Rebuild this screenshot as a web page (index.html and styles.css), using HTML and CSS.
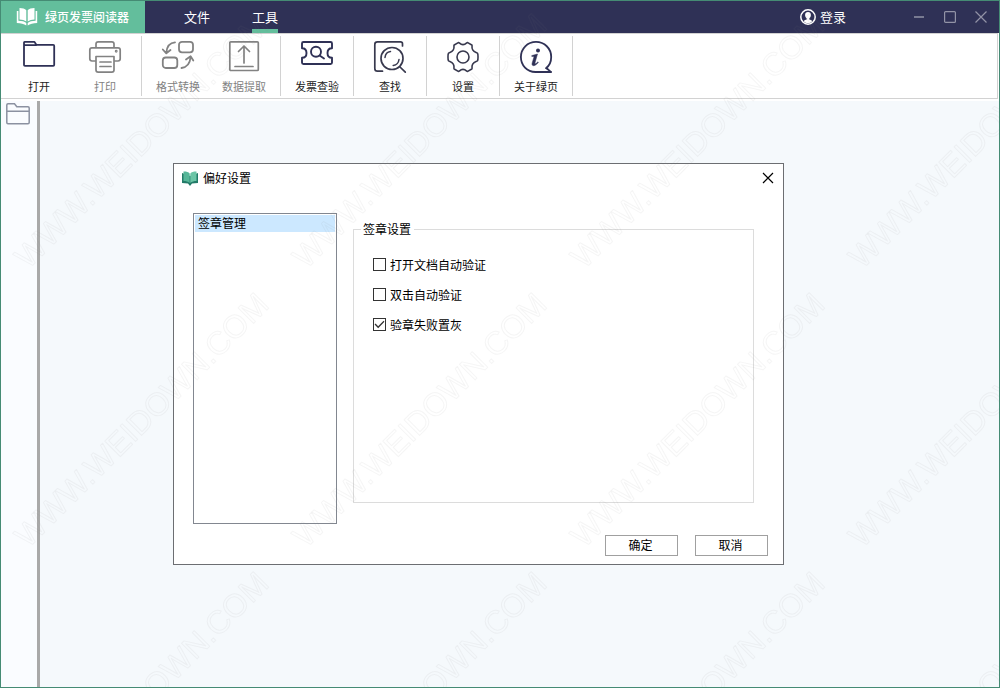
FILE: index.html
```html
<!DOCTYPE html>
<html lang="zh-CN">
<head>
<meta charset="utf-8">
<title>绿页发票阅读器</title>
<link rel="stylesheet" href="styles.css">
</head>
<body>
<div class="window">
  <header class="titlebar">
    <div class="brand">
      <svg class="brand-logo" width="22" height="20" viewBox="0 0 22 20" fill="#fff" aria-hidden="true">
        <path d="M3.500 1C6.500 1 9 1.800 10.300 3.200V14.500C8.500 13.200 6.200 12.600 3.500 12.500Z"/>
        <path d="M18.500 1C15.500 1 13 1.800 11.700 3.200V14.500C13.500 13.200 15.800 12.600 18.500 12.500Z"/>
        <path d="M0.800 4H2.400V13.800C6 13.900 8.700 14.600 10.300 16V18.500C8 16.900 4.800 16.200 0.800 16Z"/>
        <path d="M21.200 4H19.600V13.800C16 13.900 13.300 14.600 11.700 16V18.500C14 16.900 17.200 16.200 21.200 16Z"/>
      </svg>
      <span>绿页发票阅读器</span>
    </div>
    <nav class="tabs">
      <button class="tab" type="button">文件</button>
      <button class="tab tab-active" type="button">工具</button>
    </nav>
    <button class="login" type="button">
      <svg width="16" height="16" viewBox="0 0 16 16" aria-hidden="true">
        <circle cx="8" cy="8" r="7.200" fill="none" stroke="#fff" stroke-width="1.500"/>
        <path d="M8 3C9.900 3 10.900 4.300 10.900 6C10.900 7.400 10.200 8.800 9.300 9.500V10.600C10.200 11 11.500 11.200 12.300 12C10.500 15 5.500 15 3.700 12C4.500 11.200 5.800 11 6.700 10.600V9.500C5.800 8.800 5.100 7.400 5.100 6C5.100 4.300 6.100 3 8 3Z" fill="#fff"/>
      </svg>
      <span>登录</span>
    </button>
    <div class="controls">
      <button type="button" aria-label="最小化"><svg width="12" height="12" viewBox="0 0 12 12"><path d="M1 6H11" stroke-width="1.500"/></svg></button>
      <button type="button" aria-label="最大化"><svg width="12" height="12" viewBox="0 0 12 12"><rect x="0.600" y="0.600" width="10.800" height="10.800" rx="1"/></svg></button>
      <button type="button" aria-label="关闭"><svg width="12" height="12" viewBox="0 0 12 12"><path d="M0.500 0.500L11.500 11.500M11.500 0.500L0.500 11.500"/></svg></button>
    </div>
  </header>

  <div class="toolbar">
    <div class="group">
      <button class="tool" type="button">
        <svg width="34" height="34" viewBox="0 0 34 34" stroke="#2f3156" stroke-width="1.800"><path d="M2 25V2.500Q2 1.900 2.600 1.900H12.500L14.300 4.800H31.200Q32.200 4.800 32.200 5.800V24.800Q32.200 25.800 31.200 25.800H3Q2 25.800 2 25ZM2 5.200H14"/></svg>
        <span>打开</span>
      </button>
      <button class="tool" type="button" disabled>
        <svg width="34" height="34" viewBox="0 0 34 34" stroke="#828282" stroke-width="1.700"><path d="M8 8V4Q8 1.800 10.200 1.800H23.800Q26 1.800 26 4V8M8 21H4Q1.800 21 1.800 18.800V10Q1.800 7.800 4 7.800H30Q32.200 7.800 32.200 10V18.800Q32.200 21 30 21H26M8 16.500H26V30Q26 32.200 23.800 32.200H10.200Q8 32.200 8 30ZM12 22H23M12 26.500H23"/><circle cx="28.200" cy="11.200" r="0.600"/></svg>
        <span>打印</span>
      </button>
    </div>
    <div class="group">
      <button class="tool" type="button" disabled>
        <svg width="34" height="34" viewBox="0 0 34 34" stroke="#828282" stroke-width="1.800"><rect x="18" y="1.800" width="14" height="10.500" rx="3"/><rect x="1.800" y="17.500" width="14.500" height="10.500" rx="3"/><path d="M14 2.300C9 2.800 6 6.200 5.500 12M1.800 9.500L5.300 13.300L9.500 10M20.500 28C25.700 27.200 29 23.500 29.500 17.500M25 19.500L29.600 16.300L32.300 20.500"/></svg>
        <span>格式转换</span>
      </button>
      <button class="tool" type="button" disabled>
        <svg width="34" height="34" viewBox="0 0 34 34" stroke="#828282" stroke-width="1.700"><rect x="2.800" y="1.800" width="28.500" height="28.700" rx="1"/><path d="M17 23V6M11.500 11.500L17 6L22.500 11.500M8 26.500H26"/></svg>
        <span>数据提取</span>
      </button>
    </div>
    <div class="group">
      <button class="tool" type="button">
        <svg width="34" height="34" viewBox="0 0 34 34" stroke="#2f3156" stroke-width="1.900"><path d="M3.500 2H30.500Q32 2 32 3.500V8.200C28.800 8.200 27.500 10.300 27.500 13C27.500 15.700 28.800 17.800 32 17.800V22.500Q32 24 30.500 24H3.500Q2 24 2 22.500V17.800C4.800 17.800 6.500 15.700 6.500 13C6.500 10.300 4.800 8.200 2 8.200V3.500Q2 2 3.500 2Z"/><circle cx="16" cy="11.800" r="5"/><path d="M19.600 15.500L24 18.500"/></svg>
        <span>发票查验</span>
      </button>
    </div>
    <div class="group">
      <button class="tool" type="button">
        <svg width="34" height="34" viewBox="0 0 34 34" stroke="#38394e" stroke-width="1.700"><path d="M29.500 6V3.800Q29.500 1.800 27.500 1.800H4.500Q1.800 1.800 1.800 4.500V28.500Q1.800 31.200 4.500 31.200H9.500M27 27L32.300 32.200"/><circle cx="19" cy="18.500" r="11"/><path d="M12 17.500C12.300 14.500 14.500 12 17.500 11.600M26 19.500C25.600 22.700 23.500 25 20.200 25.500" stroke-width="1.500"/></svg>
        <span>查找</span>
      </button>
    </div>
    <div class="group">
      <button class="tool" type="button">
        <svg width="34" height="34" viewBox="0 0 34 34" stroke="#38394e" stroke-width="1.600"><path d="M12.300 2.600C13.500 2.300 13.800 4.600 17 4.600C20.200 4.600 20.500 2.300 21.700 2.600L25.800 5C26.700 5.700 25.100 7.100 26.700 9.900C28.300 12.700 30.500 12.200 31.500 13.200C32.200 14.200 32.200 19.800 31.500 20.800C30.500 21.800 28.300 21.300 26.700 24.100C25.100 26.900 26.700 28.300 25.800 29L21.700 31.400C20.500 31.700 20.200 29.400 17 29.400C13.800 29.400 13.500 31.700 12.300 31.400L8.200 29C7.300 28.300 8.900 26.900 7.300 24.100C5.700 21.300 3.500 21.800 2.500 20.800C1.800 19.800 1.800 14.200 2.500 13.200C3.500 12.200 5.700 12.700 7.300 9.900C8.900 7.100 7.300 5.700 8.200 5Z"/><circle cx="17" cy="17" r="6"/></svg>
        <span>设置</span>
      </button>
    </div>
    <div class="group">
      <button class="tool" type="button">
        <svg width="34" height="34" viewBox="0 0 34 34" stroke="#2f3156" stroke-width="1.800"><path d="M32.200 32H16.500C8 32 1.900 25.300 1.900 17C1.900 8.500 8.500 1.900 17 1.900C25.500 1.900 32.200 8.500 32.200 17C32.200 21.500 30 26 27 28.200C29 29 30.500 31 32.200 32Z"/><circle cx="19" cy="10.500" r="2" fill="#2f3156" stroke="none"/><path d="M13 15.500L18.500 14L15.900 23.200C15.700 24.400 17.500 23.500 19 21.800L19.400 22.300C16.500 26.500 12.300 26.800 13.100 23.200L15.100 16.400L13 16.400Z" fill="#2f3156" stroke-width="0.500"/></svg>
        <span>关于绿页</span>
      </button>
    </div>
  </div>

  <main class="workspace">
    <aside class="sidebar">
      <button type="button" aria-label="文件列表">
        <svg width="24" height="22" viewBox="0 0 24 22" fill="none" stroke="#8b91a1" stroke-width="1.500"><path d="M0.800 19.500V2Q0.800 0.800 2 0.800H8.500L10.800 3.800H22Q23.200 3.800 23.200 5V19.500Q23.200 20.700 22 20.700H2Q0.800 20.700 0.800 19.500ZM0.800 8.300H23.200"/></svg>
      </button>
    </aside>
    <div class="splitter"></div>
    <div class="canvas"></div>
  </main>

  <section class="dialog" role="dialog" aria-labelledby="dialog-title">
    <header class="dialog-head">
      <svg width="16" height="15" viewBox="0 0 16 15" aria-hidden="true">
        <path d="M0 2L8 5L16 2V12L10 12.600L8 15L6 12.600L0 12Z" fill="#237b68"/>
        <path d="M1.500 0.500C4 0.400 6.500 1 7.700 2.500V12C6 10.400 3.800 10 1.500 10Z" fill="#56b698"/>
        <path d="M14.500 0.500C12 0.400 9.500 1 8.300 2.500V12C10 10.400 12.200 10 14.500 10Z" fill="#6bc5a6"/>
      </svg>
      <h1 id="dialog-title">偏好设置</h1>
      <button class="dialog-close" type="button" aria-label="关闭"><svg width="12" height="12" viewBox="0 0 12 12" stroke="#000" stroke-width="1.200"><path d="M1 1L11 11M11 1L1 11"/></svg></button>
    </header>
    <div class="dialog-body">
      <ul class="pages" role="listbox" aria-label="设置分类">
        <li role="option" aria-selected="true">签章管理</li>
      </ul>
      <fieldset class="options">
        <legend>签章设置</legend>
        <label><input type="checkbox"><span>打开文档自动验证</span></label>
        <label><input type="checkbox"><span>双击自动验证</span></label>
        <label><input type="checkbox" checked><span>验章失败置灰</span></label>
      </fieldset>
    </div>
    <footer class="dialog-foot">
      <button type="button">确定</button>
      <button type="button">取消</button>
    </footer>
  </section>

  <svg class="watermark" aria-hidden="true">
    <defs>
      <pattern id="mark" x="0" y="276" width="278" height="279" patternUnits="userSpaceOnUse">
        <text class="mark-text" transform="translate(28 273) rotate(-45)">WWW.WEIDOWN.COM</text>
      </pattern>
    </defs>
    <rect width="100%" height="100%" fill="url(#mark)"/>
  </svg>
</div>
</body>
</html>
```
FILE: styles.css
```css
* {
  box-sizing: border-box;
}

body {
  margin: 0;
  padding: 0 1px 1px 0;
  height: 100vh;
  background: #fff;
  font-family: "Noto Sans CJK SC", sans-serif;
  font-size: 12px;
  line-height: 16px;
  color: #000;
}

button {
  margin: 0;
  padding: 0;
  border: 0;
  background: none;
  font: inherit;
  color: inherit;
}

svg {
  display: block;
}

.window {
  position: relative;
  display: flex;
  flex-direction: column;
  height: 100%;
  border: 1px solid #458b74;
  background: #fff;
  overflow: hidden;
}

/* Title bar */
.titlebar {
  display: flex;
  flex: none;
  height: 32px;
  background: #2f3156;
  color: #fff;
  font-size: 13px;
}

.brand {
  display: flex;
  align-items: center;
  gap: 7px;
  width: 144px;
  padding-left: 15px;
  background: #63be9c;
  font-size: 12px;
  font-weight: 500;
}

.tabs {
  display: flex;
  gap: 42px;
  padding-left: 39px;
}

.tab {
  border-top: 4px solid transparent;
  border-bottom: 4px solid transparent;
}

.tab-active {
  border-bottom-color: #63be9c;
}

.login {
  display: flex;
  align-items: center;
  gap: 4px;
  margin-left: auto;
}

.controls {
  display: flex;
  gap: 19px;
  padding: 0 12px 0 67px;
}

.controls svg {
  fill: none;
  stroke: #9293a6;
  stroke-width: 1.2;
}

/* Toolbar */
.toolbar {
  display: flex;
  flex: none;
  height: 66px;
  margin: 0 1px 2px 0;
  padding: 2px 1px;
  border: 1px solid #d2d2d2;
  border-left: 0;
}

.group {
  display: flex;
  padding: 0 3px;
  border-right: 1px solid #d2d2d2;
}

.group:first-child {
  padding-left: 4px;
}

.tool {
  display: flex;
  flex-direction: column;
  align-items: center;
  gap: 4px;
  width: 66px;
  padding-top: 4px;
  font-size: 11px;
  color: #222;
}

.tool:disabled {
  color: #828282;
}

.tool svg {
  fill: none;
  stroke-linecap: round;
  stroke-linejoin: round;
}

/* Workspace */
.workspace {
  display: flex;
  flex: 1;
  min-height: 0;
}

.sidebar {
  width: 36px;
  padding: 2px 5px;
  background: #fafcff;
}

.splitter {
  width: 3px;
  background: #a9a9a9;
}

.canvas {
  flex: 1;
  background: #f5f9fc;
}

/* Preferences dialog */
.dialog {
  position: absolute;
  top: 162px;
  left: 172px;
  display: flex;
  flex-direction: column;
  width: 611px;
  border: 1px solid #6c6e72;
  background: #fff;
}

.dialog-head {
  display: flex;
  align-items: center;
  gap: 5px;
  height: 29px;
  padding: 0 9px 1px 8px;
}

.dialog-head h1 {
  margin: 0;
  font-size: 12px;
  font-weight: 400;
}

.dialog-close {
  margin-left: auto;
}

.dialog-body {
  display: flex;
  gap: 16px;
  padding: 20px 29px 0 19px;
}

.pages {
  width: 144px;
  height: 311px;
  margin: 0;
  padding: 1px;
  border: 1px solid #828790;
  list-style: none;
}

.pages li {
  height: 17px;
  padding-left: 3px;
  background: #cce8ff;
}

.options {
  display: flex;
  flex: 1;
  flex-direction: column;
  gap: 14px;
  min-width: 0;
  margin: 8px 0 21px;
  padding: 20px 19px;
  border: 1px solid #dcdcdc;
}

.options legend {
  margin-left: -12px;
  padding: 0 3px 0 2px;
}

.options label {
  display: flex;
  align-items: flex-start;
  align-self: flex-start;
  gap: 4px;
}

.options input {
  appearance: none;
  width: 13px;
  height: 13px;
  margin: 1px 0 0;
  border: 1px solid #333;
  background: #fff;
}

.options input:checked::before {
  content: "";
  display: block;
  height: 11px;
  background: #333;
  clip-path: polygon(5% 50%, 14% 42%, 38% 66%, 87% 15%, 95% 24%, 38% 83%);
}

.dialog-foot {
  display: flex;
  justify-content: flex-end;
  gap: 17px;
  padding: 11px 15px 8px;
}

.dialog-foot button {
  width: 73px;
  height: 21px;
  padding: 0 2px 2px 0;
  border: 1px solid #a0a0a0;
}

/* Tiled watermark above the whole window */
.watermark {
  position: absolute;
  inset: -1px;
  width: calc(100% + 2px);
  height: calc(100% + 2px);
  pointer-events: none;
}

.mark-text {
  font-family: "Liberation Sans", sans-serif;
  font-size: 32px;
  fill: none;
  stroke: rgba(120, 120, 120, 0.07);
  stroke-width: 1px;
  stroke-linejoin: round;
}
```
